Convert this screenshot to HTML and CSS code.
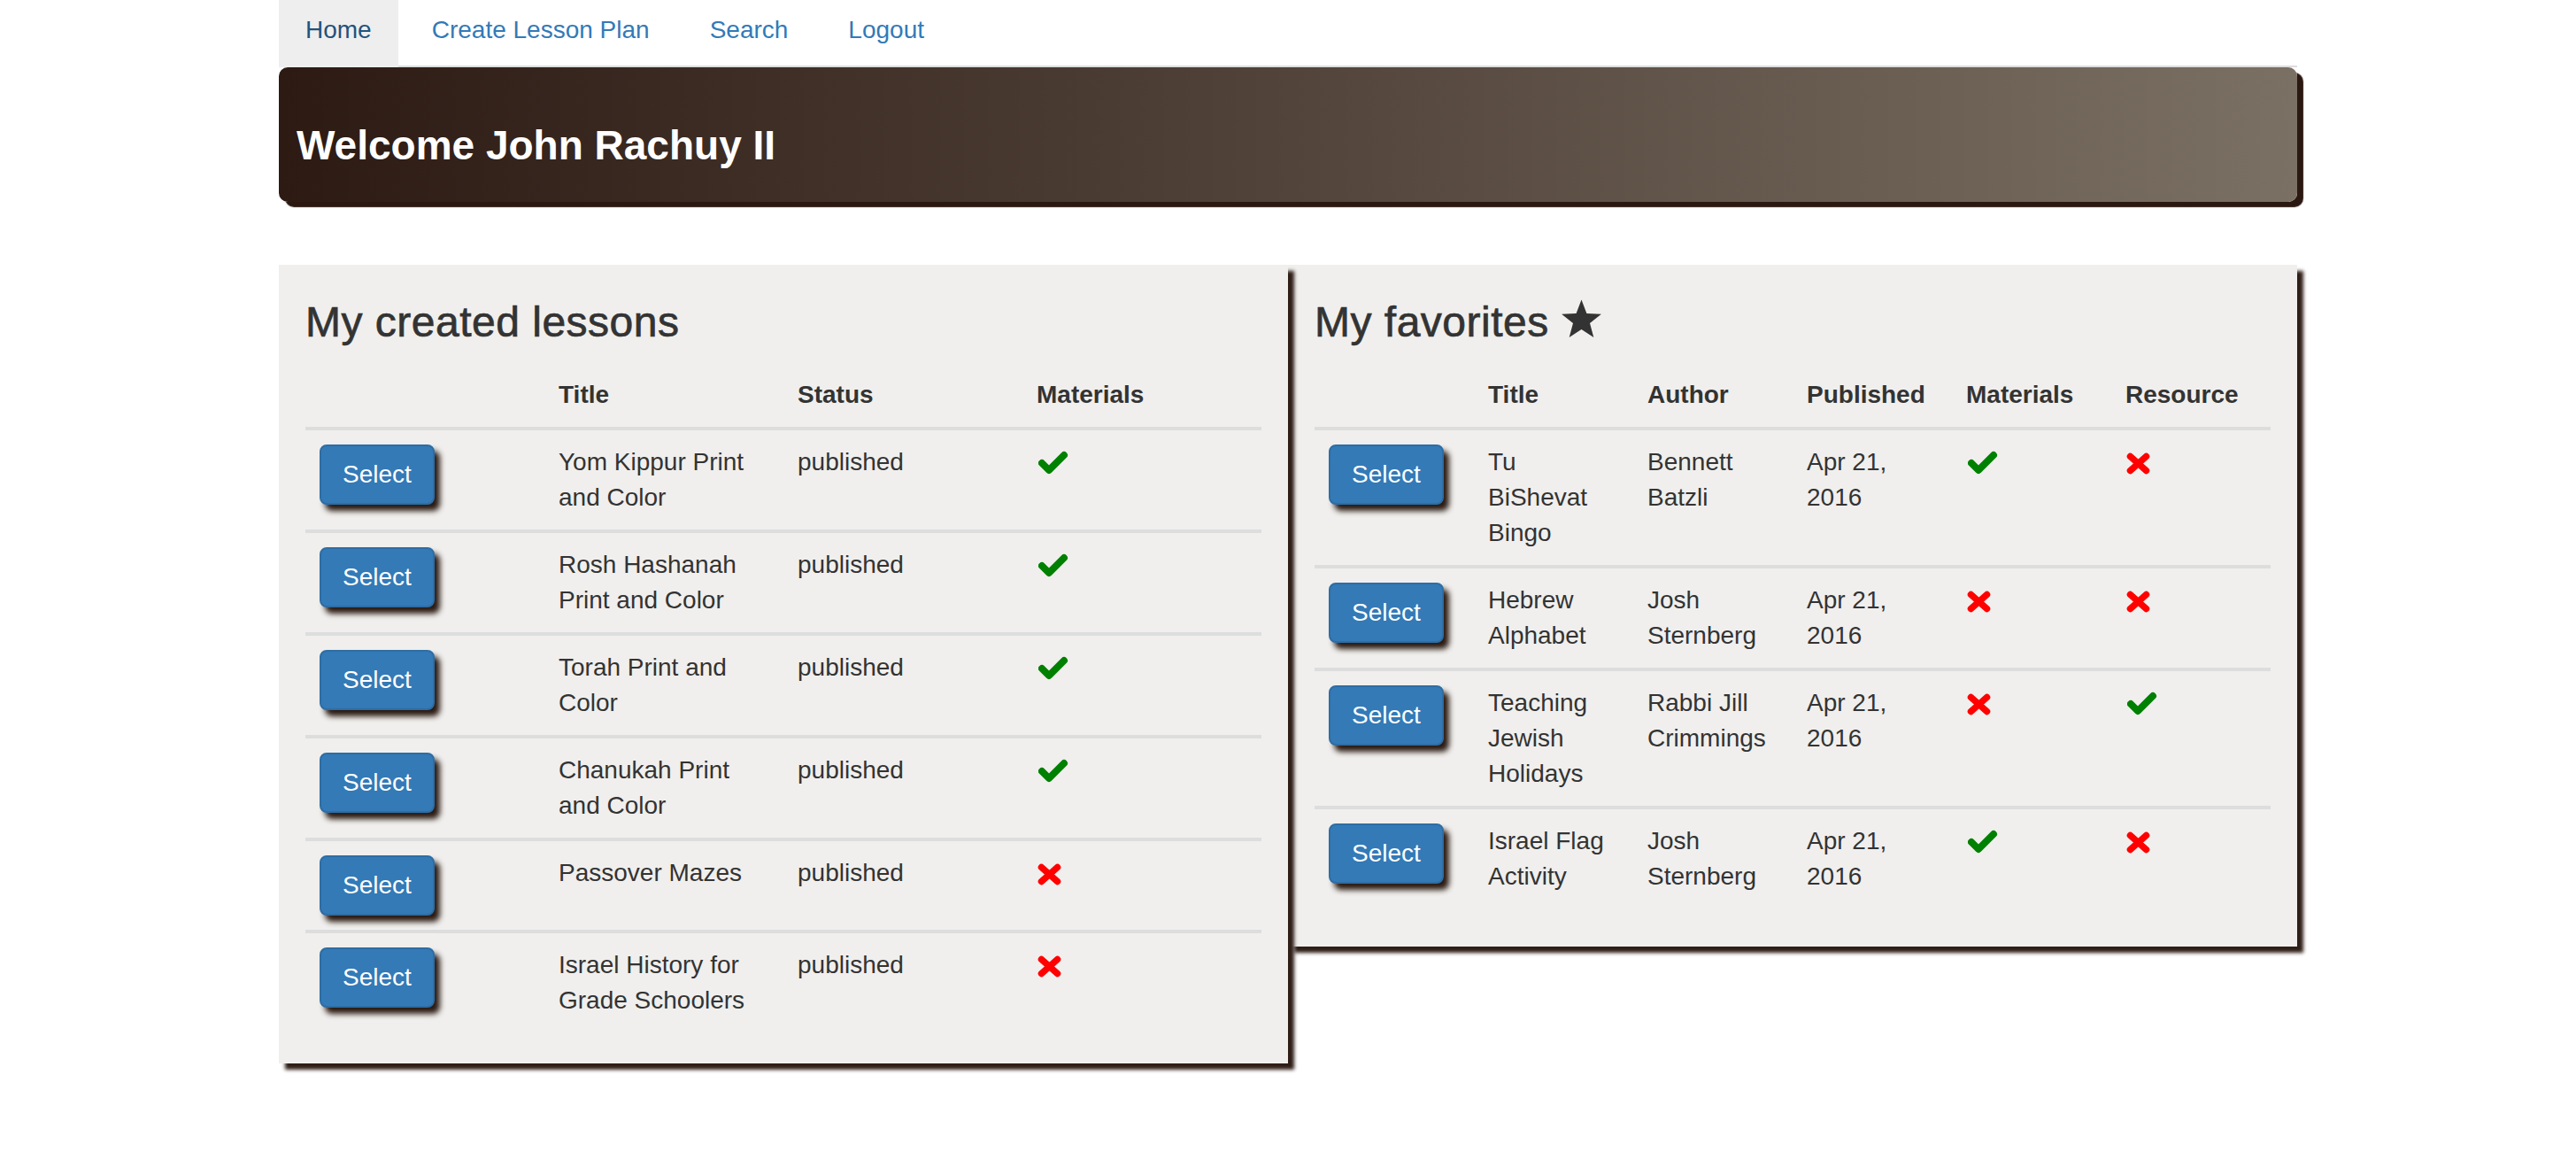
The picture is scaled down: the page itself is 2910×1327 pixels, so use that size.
FILE: index.html
```html
<!DOCTYPE html>
<html lang="en">
<head>
<meta charset="utf-8">
<title>Home</title>
<link rel="stylesheet" href="styles.css">
</head>
<body>
<div class="container">
  <ul class="tabs">
    <li class="tab tab-active"><a class="tab-link">Home</a></li>
    <li class="tab"><a class="tab-link">Create Lesson Plan</a></li>
    <li class="tab"><a class="tab-link">Search</a></li>
    <li class="tab"><a class="tab-link">Logout</a></li>
  </ul>

  <div class="jumbo">
    <h2 class="jumbo-title">Welcome John Rachuy II</h2>
  </div>

  <div class="panels">
    <section class="panel panel-left">
      <h3 class="panel-title">My created lessons</h3>
      <table class="grid">
        <thead>
          <tr><th></th><th>Title</th><th>Status</th><th>Materials</th></tr>
        </thead>
        <tbody>
          <tr>
            <td><button class="btn">Select</button></td>
            <td>Yom Kippur Print and Color</td>
            <td>published</td>
            <td><svg class="ico-ok" viewBox="0 0 34 27"><polyline points="4,14 12,22 29,5"/></svg></td>
          </tr>
          <tr>
            <td><button class="btn">Select</button></td>
            <td>Rosh Hashanah Print and Color</td>
            <td>published</td>
            <td><svg class="ico-ok" viewBox="0 0 34 27"><polyline points="4,14 12,22 29,5"/></svg></td>
          </tr>
          <tr>
            <td><button class="btn">Select</button></td>
            <td>Torah Print and Color</td>
            <td>published</td>
            <td><svg class="ico-ok" viewBox="0 0 34 27"><polyline points="4,14 12,22 29,5"/></svg></td>
          </tr>
          <tr>
            <td><button class="btn">Select</button></td>
            <td>Chanukah Print and Color</td>
            <td>published</td>
            <td><svg class="ico-ok" viewBox="0 0 34 27"><polyline points="4,14 12,22 29,5"/></svg></td>
          </tr>
          <tr>
            <td><button class="btn">Select</button></td>
            <td>Passover Mazes</td>
            <td>published</td>
            <td><svg class="ico-no" viewBox="0 0 27 25"><path d="M4.5 4.5 L22.5 20.5 M22.5 4.5 L4.5 20.5"/></svg></td>
          </tr>
          <tr>
            <td><button class="btn">Select</button></td>
            <td>Israel History for Grade Schoolers</td>
            <td>published</td>
            <td><svg class="ico-no" viewBox="0 0 27 25"><path d="M4.5 4.5 L22.5 20.5 M22.5 4.5 L4.5 20.5"/></svg></td>
          </tr>
        </tbody>
      </table>
    </section>

    <section class="panel panel-right">
      <h3 class="panel-title">My favorites <svg class="ico-star" viewBox="0 0 45 44"><polygon points="22.5,0.5 28.4,15.9 44.9,16.7 32,27.1 36.3,43 22.5,34 8.7,43 13,27.1 0.1,16.7 16.6,15.9"/></svg></h3>
      <table class="grid grid-fav">
        <thead>
          <tr><th></th><th>Title</th><th>Author</th><th>Published</th><th>Materials</th><th>Resource</th></tr>
        </thead>
        <tbody>
          <tr>
            <td><button class="btn">Select</button></td>
            <td>Tu BiShevat Bingo</td>
            <td>Bennett Batzli</td>
            <td>Apr 21, 2016</td>
            <td><svg class="ico-ok" viewBox="0 0 34 27"><polyline points="4,14 12,22 29,5"/></svg></td>
            <td><svg class="ico-no" viewBox="0 0 27 25"><path d="M4.5 4.5 L22.5 20.5 M22.5 4.5 L4.5 20.5"/></svg></td>
          </tr>
          <tr>
            <td><button class="btn">Select</button></td>
            <td>Hebrew Alphabet</td>
            <td>Josh Sternberg</td>
            <td>Apr 21, 2016</td>
            <td><svg class="ico-no" viewBox="0 0 27 25"><path d="M4.5 4.5 L22.5 20.5 M22.5 4.5 L4.5 20.5"/></svg></td>
            <td><svg class="ico-no" viewBox="0 0 27 25"><path d="M4.5 4.5 L22.5 20.5 M22.5 4.5 L4.5 20.5"/></svg></td>
          </tr>
          <tr>
            <td><button class="btn">Select</button></td>
            <td>Teaching Jewish Holidays</td>
            <td>Rabbi Jill Crimmings</td>
            <td>Apr 21, 2016</td>
            <td><svg class="ico-no" viewBox="0 0 27 25"><path d="M4.5 4.5 L22.5 20.5 M22.5 4.5 L4.5 20.5"/></svg></td>
            <td><svg class="ico-ok" viewBox="0 0 34 27"><polyline points="4,14 12,22 29,5"/></svg></td>
          </tr>
          <tr>
            <td><button class="btn">Select</button></td>
            <td>Israel Flag Activity</td>
            <td>Josh Sternberg</td>
            <td>Apr 21, 2016</td>
            <td><svg class="ico-ok" viewBox="0 0 34 27"><polyline points="4,14 12,22 29,5"/></svg></td>
            <td><svg class="ico-no" viewBox="0 0 27 25"><path d="M4.5 4.5 L22.5 20.5 M22.5 4.5 L4.5 20.5"/></svg></td>
          </tr>
        </tbody>
      </table>
    </section>
  </div>
</div>
</body>
</html>
```

FILE: styles.css
```css
* {
  box-sizing: border-box;
}

html, body {
  margin: 0;
  padding: 0;
  background: #ffffff;
}

body {
  font-family: "Liberation Sans", Arial, Helvetica, sans-serif;
  font-size: 28px;
  line-height: 40px;
  color: #333333;
}

.container {
  width: 2280px;
  margin: 0 auto;
  padding-bottom: 100px;
}

/* nav tabs */
.tabs {
  list-style: none;
  margin: 0;
  padding: 0;
  display: flex;
  gap: 8px;
  border-bottom: 2px solid #dddddd;
}

.tab {
  margin-bottom: -2px;
}

.tab-link {
  display: block;
  padding: 14px 30px 22px;
  line-height: 40px;
  color: #337ab7;
  text-decoration: none;
  cursor: pointer;
}

.tab-active .tab-link {
  background: #eeeeee;
  color: #23527c;
}

/* jumbotron */
.jumbo {
  height: 152px;
  padding: 62px 20px 0;
  border-radius: 10px;
  background: linear-gradient(to right, #2c1a13 0%, #4a3b32 40%, #7b7064 100%);
  box-shadow: 7px 6px 1px #2b1911;
  margin-bottom: 71px;
}

.jumbo-title {
  margin: 0;
  font-size: 46px;
  line-height: 52px;
  font-weight: bold;
  color: #ffffff;
}

/* panels */
.panels {
  display: flex;
  align-items: flex-start;
}

.panel {
  width: 50%;
  padding: 0 30px;
  background: #f0efed;
  box-shadow: 7px 7px 4px #2e1e16;
}

.panel-left {
  position: relative;
  z-index: 1;
}

.panel-title {
  margin: 38px 0 20px;
  font-size: 48px;
  line-height: 53px;
  font-weight: normal;
  letter-spacing: 0.5px;
  -webkit-text-stroke: 0.7px #333333;
  color: #333333;
}

.ico-star {
  width: 45px;
  height: 44px;
  vertical-align: -2px;
  fill: #333333;
}

/* tables */
.grid {
  width: 100%;
  table-layout: fixed;
  border-collapse: collapse;
  margin-bottom: 35px;
}

.grid-fav {
  margin-bottom: 43px;
}

.grid th {
  padding: 16px;
  line-height: 40px;
  text-align: left;
  vertical-align: bottom;
  font-weight: bold;
  border-bottom: 4px solid #dddddd;
}

.grid td {
  padding: 16px;
  line-height: 40px;
  vertical-align: top;
  border-top: 4px solid #dddddd;
}

.btn {
  display: block;
  margin: 0;
  padding: 12px 24px;
  font-family: inherit;
  font-size: 28px;
  line-height: 40px;
  color: #ffffff;
  background: #337ab7;
  border: 2px solid #2e6da4;
  border-radius: 8px;
  box-shadow: 6px 7px 6px #2a1a12;
  cursor: pointer;
}

.ico-ok {
  display: block;
  width: 34px;
  height: 27px;
  margin: 7px 0 0 2px;
  fill: none;
  stroke: #008000;
  stroke-width: 8;
  stroke-linecap: round;
  stroke-linejoin: round;
}

.ico-no {
  display: block;
  width: 27px;
  height: 25px;
  margin: 9px 0 0 1px;
  fill: none;
  stroke: #ff0000;
  stroke-width: 7.5;
  stroke-linecap: round;
}
```
